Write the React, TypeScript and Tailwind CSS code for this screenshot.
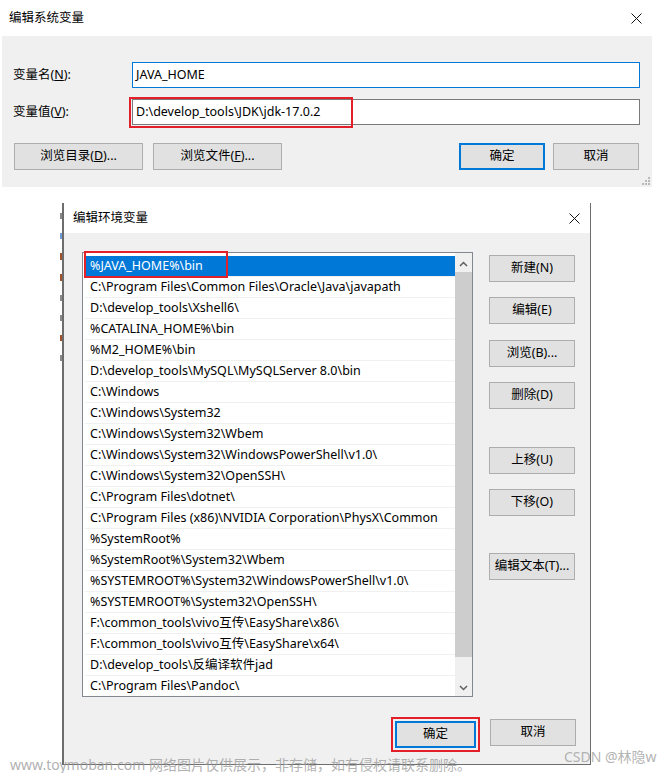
import React from "react";

const FONT = { fontFamily: '"Noto Sans", "Noto Sans CJK SC", sans-serif' };

const paths = [
  "%JAVA_HOME%\\bin",
  "C:\\Program Files\\Common Files\\Oracle\\Java\\javapath",
  "D:\\develop_tools\\Xshell6\\",
  "%CATALINA_HOME%\\bin",
  "%M2_HOME%\\bin",
  "D:\\develop_tools\\MySQL\\MySQLServer 8.0\\bin",
  "C:\\Windows",
  "C:\\Windows\\System32",
  "C:\\Windows\\System32\\Wbem",
  "C:\\Windows\\System32\\WindowsPowerShell\\v1.0\\",
  "C:\\Windows\\System32\\OpenSSH\\",
  "C:\\Program Files\\dotnet\\",
  "C:\\Program Files (x86)\\NVIDIA Corporation\\PhysX\\Common",
  "%SystemRoot%",
  "%SystemRoot%\\System32\\Wbem",
  "%SYSTEMROOT%\\System32\\WindowsPowerShell\\v1.0\\",
  "%SYSTEMROOT%\\System32\\OpenSSH\\",
  "F:\\common_tools\\vivo互传\\EasyShare\\x86\\",
  "F:\\common_tools\\vivo互传\\EasyShare\\x64\\",
  "D:\\develop_tools\\反编译软件jad",
  "C:\\Program Files\\Pandoc\\",
];

function CloseIcon() {
  return (
    <svg width="11" height="11" viewBox="0 0 11 11">
      <path d="M0.5 0.5 L10.5 10.5 M10.5 0.5 L0.5 10.5" stroke="#111" strokeWidth="1" />
    </svg>
  );
}

function WinButton({
  children,
  className = "",
  primary = false,
}: {
  children: React.ReactNode;
  className?: string;
  primary?: boolean;
}) {
  return (
    <div
      className={`h-[27px] flex items-center justify-center bg-[#e1e1e1] text-[12.5px] text-black ${
        primary ? "border-2 border-[#0078d7]" : "border border-[#adadad]"
      } ${className}`}
    >
      {children}
    </div>
  );
}

function SystemVarDialog() {
  return (
    <div>
      {/* title bar */}
      <div className="h-[36px] flex items-center justify-between pl-[9px] pr-[20px]">
        <span className="text-[12.5px] text-black">编辑系统变量</span>
        <CloseIcon />
      </div>

      {/* body */}
      <div className="relative ml-[2px] w-[650px] h-[151px] bg-[#f0f0f0] pt-[26px]">
        <div className="flex items-center h-[26px]">
          <span className="w-[130px] pl-[11px] text-[12.5px]">
            变量名(<span className="underline">N</span>):
          </span>
          <div className="w-[508px] h-[26px] bg-white border border-[#0078d7] flex items-center px-[3px] text-[12.5px]">
            JAVA_HOME
          </div>
        </div>
        <div className="flex items-center h-[26px] mt-[11px]">
          <span className="w-[130px] pl-[11px] text-[12.5px]">
            变量值(<span className="underline">V</span>):
          </span>
          <div className="relative w-[508px] h-[26px] bg-white border border-[#7a7a7a] flex items-center px-[3px] text-[12.5px]">
            D:\develop_tools\JDK\jdk-17.0.2
            <div className="absolute left-[-4px] top-[-3px] w-[224px] h-[31px] border-2 border-[#e3202a]" />
          </div>
        </div>
        <div className="flex items-center mt-[18px] pl-[12px]">
          <WinButton className="w-[129px]">
            浏览目录(<span className="underline">D</span>)...
          </WinButton>
          <WinButton className="w-[129px] ml-[10px]">
            浏览文件(<span className="underline">F</span>)...
          </WinButton>
          <WinButton primary className="w-[86px] ml-[177px]">
            确定
          </WinButton>
          <WinButton className="w-[86px] ml-[8px]">取消</WinButton>
        </div>
        {/* resize grip */}
        <div className="absolute right-[2px] bottom-[2px] grid grid-cols-3 gap-[1px]">
          <span className="w-[2px] h-[2px]" />
          <span className="w-[2px] h-[2px]" />
          <span className="w-[2px] h-[2px] bg-[#b8b8b8]" />
          <span className="w-[2px] h-[2px]" />
          <span className="w-[2px] h-[2px] bg-[#b8b8b8]" />
          <span className="w-[2px] h-[2px] bg-[#b8b8b8]" />
          <span className="w-[2px] h-[2px] bg-[#b8b8b8]" />
          <span className="w-[2px] h-[2px] bg-[#b8b8b8]" />
          <span className="w-[2px] h-[2px] bg-[#b8b8b8]" />
        </div>
      </div>
    </div>
  );
}

function PathList() {
  return (
    <div className="relative w-[391px] h-[445px] border border-[#828790] bg-white flex">
      <div className="flex-1 pl-[2px] pt-[3px] overflow-hidden">
        {paths.map((p, i) => (
          <div
            key={i}
            className={`h-[21px] flex items-center pl-[5px] text-[12.5px] whitespace-nowrap border-b border-[#f0f0f0] ${
              i === 0 ? "bg-[#0078d7] text-white" : "text-black"
            }`}
          >
            {p}
          </div>
        ))}
      </div>
      {/* scrollbar */}
      <div className="w-[17px] bg-[#f0f0f0] flex flex-col">
        <div className="h-[17px] flex items-center justify-center mt-[2px]">
          <svg width="9" height="6" viewBox="0 0 9 6">
            <path d="M1 5 L4.5 1.5 L8 5" stroke="#606060" strokeWidth="1.5" fill="none" />
          </svg>
        </div>
        <div className="h-[385px] bg-[#cdcdcd]" />
        <div className="flex-1 flex items-end justify-center pb-[5px]">
          <svg width="9" height="6" viewBox="0 0 9 6">
            <path d="M1 1 L4.5 4.5 L8 1" stroke="#606060" strokeWidth="1.5" fill="none" />
          </svg>
        </div>
      </div>
      {/* highlight box */}
      <div className="absolute left-[1px] top-[-2px] w-[144px] h-[27px] border-2 border-[#e3202a]" />
    </div>
  );
}

function EnvVarDialog() {
  return (
    <div className="flex mt-[16px]">
      {/* background window edge */}
      <div className="w-[62px] flex flex-col items-end pt-[10px] gap-[14px]">
        <span className="w-[2px] h-[6px] bg-[#8a8a8a]" />
        <span className="w-[2px] h-[6px] bg-[#6b9bd1]" />
        <span className="w-[2px] h-[7px] bg-[#a0522d]" />
        <span className="w-[2px] h-[7px] bg-[#a0522d]" />
        <span className="w-[2px] h-[6px] bg-[#8a8a8a]" />
        <span className="w-[2px] h-[6px] bg-[#8a8a8a]" />
        <span className="w-[2px] h-[6px] bg-[#a0522d]" />
        <span className="w-[2px] h-[6px] bg-[#8a8a8a]" />
      </div>
      <div className="w-[529px] border-l-2 border-r border-b border-[#6d6d6d] bg-white">
        <div className="h-[30px] flex items-center justify-between pl-[9px] pr-[10px]">
          <span className="text-[12.5px] text-black">编辑环境变量</span>
          <CloseIcon />
        </div>
        <div className="bg-[#f0f0f0] h-[531px] pl-[18px] pt-[19px]">
          <div className="flex items-start">
            <PathList />
            <div className="flex flex-col ml-[16px] mt-[3px] w-[86px]">
              <WinButton>新建(N)</WinButton>
              <WinButton className="mt-[15px]">编辑(E)</WinButton>
              <WinButton className="mt-[16px]">浏览(B)...</WinButton>
              <WinButton className="mt-[15px]">删除(D)</WinButton>
              <WinButton className="mt-[38px]">上移(U)</WinButton>
              <WinButton className="mt-[15px]">下移(O)</WinButton>
              <WinButton className="mt-[37px]">编辑文本(T)...</WinButton>
            </div>
          </div>
          <div className="flex justify-end pr-[14px] mt-[22px]">
            <div className="p-[2px] border-2 border-[#e3202a] -m-[2px] mr-[8px]">
              <WinButton primary className="w-[81px] h-[27px]">
                确定
              </WinButton>
            </div>
            <WinButton className="w-[86px] ml-[2px]">取消</WinButton>
          </div>
        </div>
      </div>
    </div>
  );
}

export default function App() {
  return (
    <div className="relative w-[662px] h-[773px] overflow-hidden bg-white text-black" style={FONT}>
      <SystemVarDialog />
      <EnvVarDialog />

      {/* watermarks */}
      <div className="absolute left-[10px] top-[754px] text-[14px] text-[#9c9c9c]/80 whitespace-nowrap">
        www.toymoban.com 网络图片仅供展示，非存储，如有侵权请联系删除。
      </div>
      <div className="absolute left-[564px] top-[746px] text-[14px] text-[#a0a0a0]/80 whitespace-nowrap">
        CSDN @林隐w
      </div>
    </div>
  );
}
